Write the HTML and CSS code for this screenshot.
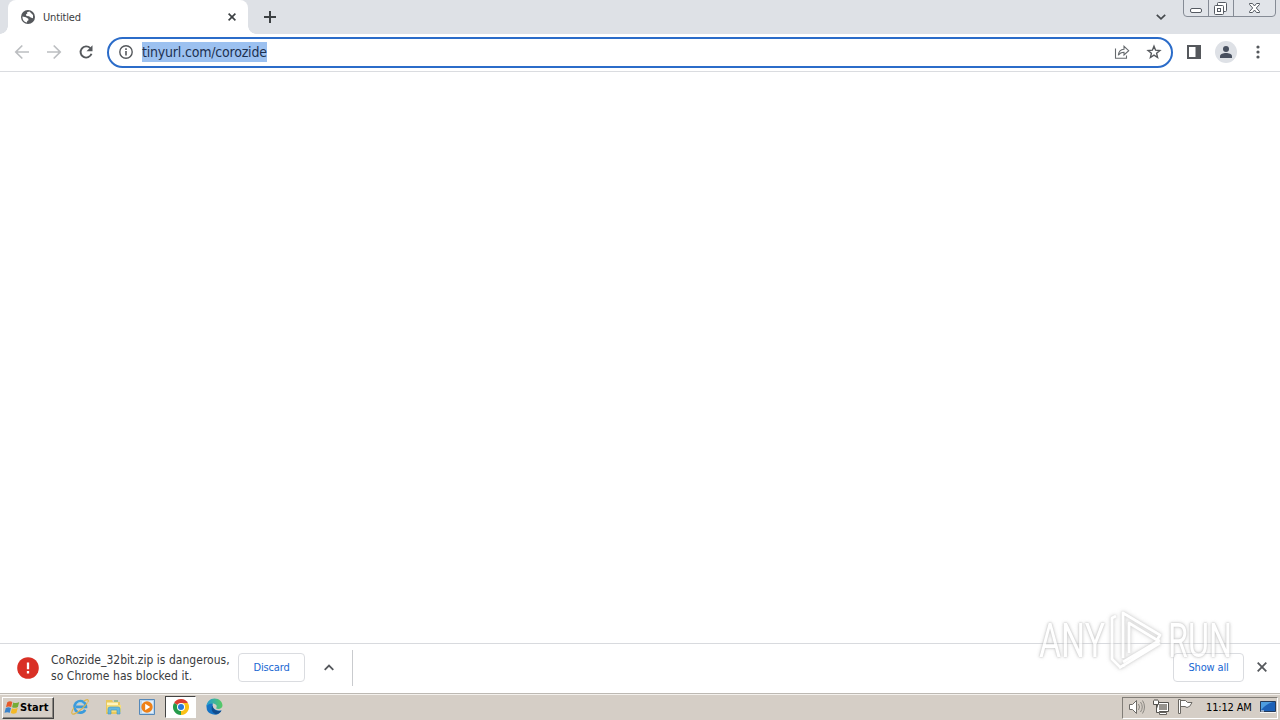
FILE: index.html
```html
<!DOCTYPE html>
<html lang="en">
<head>
<meta charset="utf-8">
<title>Untitled</title>
<link rel="stylesheet" href="styles.css">
</head>
<body>
<div class="screen">
  <header class="tabstrip">
    <div class="tab">
      <svg class="globe" width="14" height="14" viewBox="0 0 14 14"><circle cx="7" cy="7" r="7" fill="#55585c"/><path d="M6 2.2 8.500 1.600 12 5v3.200L9.700 7.600 8 6.200 5.400 6 5 4.200 6.400 3.600zM1.500 6.500l3.400.7 2.400 1.500.2 1.500-1.300.9-.2 1.500C3 12 1.200 9.400 1.500 6.500z" fill="#fff"/></svg>
      <span class="tab-title">Untitled</span>
      <svg class="tab-close" width="8" height="8" viewBox="0 0 8 8"><path d="M.6.6l6.800 6.800M7.400.6.6 7.400" stroke="#3c4043" stroke-width="1.600"/></svg>
    </div>
    <svg class="new-tab" width="12" height="12" viewBox="0 0 12 12"><path d="M6 0v12M0 6h12" stroke="#3c4043" stroke-width="2"/></svg>
    <svg class="tab-search" width="10" height="6" viewBox="0 0 10 6"><path d="M.8.8 5 4.800 9.200.8" fill="none" stroke="#45494d" stroke-width="1.700"/></svg>
    <div class="window-controls">
      <svg width="93" height="17" viewBox="0 0 93 17">
        <path d="M.5 0v13q0 3.500 3.500 3.500h85q3.500 0 3.500-3.500V0M25.500 0v16M50.500 0v16" fill="#e1e4e9" stroke="#858b95"/>
        <rect x="7.500" y="8.500" width="11" height="4" rx="1.500" fill="#fff" stroke="#555a62"/>
        <g fill="#fff" stroke="#555a62"><rect x="34.500" y="2.500" width="9" height="9" rx="1"/><rect x="31.500" y="5.500" width="9" height="9" rx="1"/><rect x="34.500" y="8.500" width="3" height="3"/></g>
        <path d="M66.500 3.500h3l2 2.500 2-2.500h3v1L73.300 8l3.200 3.500v1h-3l-2-2.500-2 2.500h-3v-1L69.700 8l-3.200-3.500z" fill="#fff" stroke="#555a62"/>
      </svg>
    </div>
  </header>
  <div class="toolbar">
    <svg class="nav" width="90" height="16" viewBox="0 0 90 16"><g fill="none" stroke-width="1.700"><path d="M15 8H2M8.300 1.500 1.800 8l6.500 6.500M33 8h13M39.700 1.500 46.200 8l-6.500 6.500" stroke="#bcbec1"/><path d="M76.300 4.200A5.600 5.600 0 1 0 77.500 9.800" stroke="#55585c" stroke-width="1.900"/></g><path d="M78.500 1.200v6h-6z" fill="#55585c"/></svg>
    <div class="omnibox">
      <svg class="info" width="14" height="14" viewBox="0 0 14 14"><circle cx="7" cy="7" r="6.200" fill="none" stroke="#55585c" stroke-width="1.400"/><path d="M7 6v4.500M7 3.300v1.600" stroke="#55585c" stroke-width="1.600"/></svg>
      <span class="url">tinyurl.com/corozide</span>
      <svg class="share" width="16" height="14" viewBox="0 0 16 14"><path d="M1.500 3.500v9.800h11V10.500M4.300 10.300C4.700 6.500 6.800 4.500 10 4.300V1.300L14.700 5.700 10 10V7.200C7.200 7.200 5.600 8.200 4.300 10.300z" fill="none" stroke="#666a6e" stroke-width="1.100"/></svg>
      <svg class="star" width="16" height="16" viewBox="0 0 16 16"><path d="M8 2.200 9.600 6.200l4.300.3-3.300 2.800 1 4.200L8 11.200l-3.600 2.300 1-4.200-3.300-2.800 4.300-.3z" fill="none" stroke="#55585c" stroke-width="1.400"/></svg>
    </div>
    <svg class="side-panel" width="14" height="14" viewBox="0 0 14 14"><path d="M0 0h14v14H0zM2 2v10h6.500V2z" fill="#55585c" fill-rule="evenodd"/></svg>
    <svg class="avatar" width="22" height="22" viewBox="0 0 22 22"><circle cx="11" cy="11" r="11" fill="#dee1e6"/><circle cx="11" cy="8" r="3" fill="#48505f"/><path d="M5 16.900v-1.600c0-2.200 3.300-3.300 6-3.300s6 1.100 6 3.300v1.600z" fill="#48505f"/></svg>
    <svg class="menu" width="4" height="14" viewBox="0 0 4 14"><g fill="#55585c"><circle cx="2" cy="2" r="1.600"/><circle cx="2" cy="7" r="1.600"/><circle cx="2" cy="12" r="1.600"/></g></svg>
  </div>
  <main class="page"></main>
  <div class="downloads">
    <svg class="danger" width="22" height="22" viewBox="0 0 22 22"><circle cx="11" cy="11" r="10.800" fill="#d93025"/><path d="M11 5.500v6.800M11 14v2.400" stroke="#fff" stroke-width="2.300"/></svg>
    <div class="message"><span>CoRozide_32bit.zip is dangerous,</span><span class="line-two">so Chrome has blocked it.</span></div>
    <div class="button discard"><span>Discard</span></div>
    <svg class="expand" width="10" height="7" viewBox="0 0 10 7"><path d="M.7 5.800 5 1.500l4.300 4.300" fill="none" stroke="#55585c" stroke-width="1.800"/></svg>
    <div class="divider"></div>
    <div class="button show-all"><span>Show all</span></div>
    <svg class="shelf-close" width="10" height="10" viewBox="0 0 10 10"><path d="m.7.7 8.600 8.600M9.300.7.7 9.300" stroke="#55585c" stroke-width="1.800"/></svg>
  </div>
  <footer class="taskbar">
    <div class="start">
      <svg width="17" height="16" viewBox="0 0 17 16"><path d="M3.300 2.200Q6 .5 8.300 2L7.200 7Q4.500 5.800 2 7z" fill="#e65a2b"/><path d="M9.200 2.500q3 1.200 6-.4l-1.300 4.800q-3 1.600-5.800.3z" fill="#75ac36"/><path d="M1.800 8Q4.500 6.700 7 8l-1.200 4.800q-2.500-1.300-5.300 0z" fill="#3a83cb"/><path d="M7.900 8.300q3 1.200 5.800-.2l-1.300 4.900q-3 1.300-5.600.1z" fill="#f4b927"/></svg>
      <span class="start-text">Start</span>
    </div>
    <svg class="ie" width="18" height="18" viewBox="0 0 18 18"><path d="M14.200 11.800A5.800 5.800 0 1 1 15 8.900H5" fill="none" stroke="#3a9bdc" stroke-width="2.600"/><path d="M12.700 3.300C16 .8 18 1.200 17 4.100M3 9.500C-.4 14.300.2 17.300 4 15.600 8.500 13.600 14.200 8 16.500 4.500" fill="none" stroke="#dcb54c" stroke-width="1.200"/><path d="M6 6.200Q9 2.800 12.500 6" fill="none" stroke="#8cd4f4"/></svg>
    <svg class="explorer" width="18" height="18" viewBox="0 0 18 18"><path d="M1 2h6l1 2h7v12H1z" fill="#e9c85c"/><path d="M2 4.500h11V10H2z" fill="#fff5bd"/><path d="M2 7h14v7H2z" fill="#f6dd79"/><path d="M3 16V11q0-2 2-2h8q2 0 2 2v5h-3v-4H6v4z" fill="#66b8de" stroke="#3f93bd" stroke-width=".6"/><path d="M9 3h4" stroke="#58a760"/></svg>
    <svg class="media" width="16" height="16" viewBox="0 0 16 16"><path d="M.5.500h15v15H.5z" fill="#b9d5ee" stroke="#5588b9"/><path d="M3 2h11v12H3z" fill="#e1effb"/><circle cx="8" cy="8" r="5.700" fill="#ee8118"/><path d="m6.200 4.700 5 3.300-5 3.300z" fill="#fff"/></svg>
    <div class="active-app"><svg width="16" height="16" viewBox="0 0 16 16"><path d="M8 8 1.070 4A8 8 0 0 1 14.930 4z" fill="#dc3e31"/><path d="M8 8 14.930 4A8 8 0 0 1 8 16z" fill="#fbc116"/><path d="M8 8v8A8 8 0 0 1 1.070 4z" fill="#269b4b"/><path d="M8 4h6.930L11.500 10 8 16l3.460-6z" fill="#fbc116"/><circle cx="8" cy="8" r="4" fill="#fff"/><circle cx="8" cy="8" r="3" fill="#2879db"/></svg></div>
    <svg class="edge" width="17" height="17" viewBox="0 0 17 17"><defs><linearGradient id="wave" x2="1"><stop stop-color="#249bd5"/><stop offset="1" stop-color="#58cb61"/></linearGradient></defs><path d="M.5 8.500C.5 4 4 3.500 7 5.500 5.500 9 8 12.800 15.500 12.500A8 8 0 0 1 .5 8.500z" fill="#1673c5"/><path d="M.5 8.500C.8 3.700 4 .5 8.500.5c5 0 8 3.500 8 7 0 3.500-4.700 4.200-6.500 2.700 2-2-.2-4.700-3.500-4.700-2.800 0-5 1-6 3z" fill="url(#wave)"/><path d="M6.500 7.500C4.500 10.500 6 15 10 16.200c2.500-.3 4.500-1.700 5.500-3.700-3.500 1.500-8.200.2-9-5z" fill="#124c8d"/></svg>
    <div class="tray">
      <svg class="speaker" width="17" height="16" viewBox="0 0 17 16"><path d="M1.500 5.500h3l4-4v13l-4-4h-3z" fill="#fff" stroke="#6d6b67"/><path d="M10.500 5q2 3 0 6M12.500 3q3.500 5 0 10M14.500 1.500q4 6.500 0 13" fill="none" stroke="#8b8882"/></svg>
      <svg class="network" width="16" height="16" viewBox="0 0 16 16"><path d="M4.500 3.500h11v9h-11z" fill="#fff" stroke="#55534f"/><path d="M6 5h8v6H6z" fill="#96938e"/><path d="M6.500 13.500h7v2h-7z" fill="#fff" stroke="#66635f"/><path d="M.5 1.500v4h5v-4M2 0v2M4 0v2M3.500 5.500v8h3" fill="#fff" stroke="#55534f"/></svg>
      <svg class="flag" width="16" height="16" viewBox="0 0 16 16"><path d="M1.500.5h2v14h-2zM3.500 1.500h5l2 2h4.500q-2 5-5 5L8 7.500H3.500z" fill="#fff" stroke="#6b6863"/></svg>
      <span class="clock">11:12 AM</span>
      <svg class="desktop" width="16" height="12" viewBox="0 0 16 12"><path d="M.5.500h15v10H.5z" fill="#1d61b7" stroke="#263b59"/><path d="M1 1h12Q6 3 1 9z" fill="#4d9de0"/><path d="M0 11.500h16" stroke="#f6f6f6"/><path d="M1 10h3" stroke="#fff"/></svg>
    </div>
  </footer>
  <div class="watermark">
    <span class="any">ANY</span>
    <svg class="play" width="58" height="64" viewBox="0 0 58 64"><path d="M9 7 5 9v41l8 8 5-2M16 49V4l37 22-3 5-28-17v30M16 53l37-22M12 59 53 34" fill="none" stroke="#fff" stroke-width="2.800" stroke-linejoin="round"/></svg>
    <span class="run">RUN</span>
  </div>
</div>
</body>
</html>
```
FILE: styles.css
```css
* { box-sizing: border-box; }
body { margin: 0; overflow: hidden; font-family: "DejaVu Sans Condensed", "DejaVu Sans", sans-serif; color: #3a3c40; }
svg { display: block; flex: none; }
span { white-space: nowrap; }
.screen { width: 1280px; height: 720px; display: flex; flex-direction: column; position: relative; background: #fff; }
.tabstrip { height: 34px; flex: none; display: flex; background: #dee1e6; padding-left: 8px; }
.tab { width: 240px; background: #fff; border-radius: 8px 8px 0 0; display: flex; align-items: center; padding-left: 13px; position: relative; }
.tab::before, .tab::after { content: ""; position: absolute; bottom: 0; width: 8px; height: 8px; }
.tab::before { left: -8px; background: radial-gradient(circle at 0 0, #dee1e6 7.5px, #fff 8px); }
.tab::after { right: -8px; background: radial-gradient(circle at 100% 0, #dee1e6 7.5px, #fff 8px); }
.tab-title { margin-left: 8px; padding-top: 1px; font-size: 11px; line-height: 14px; letter-spacing: -.15px; }
.tab-close { margin-left: auto; margin-right: 12px; }
.new-tab { margin: 11px 0 0 16px; }
.tab-search { margin: 14px 17px 0 auto; }
.window-controls { width: 93px; margin-right: 4px; }
.toolbar { height: 38px; flex: none; display: flex; align-items: center; border-bottom: 1px solid #dadce0; padding-bottom: 1px; }
.nav { margin: 0 3px 0 14px; }
.omnibox { width: 1066px; height: 31px; margin-top: 1px; border: 2px solid #2b6cc9; border-radius: 16px; display: flex; align-items: center; padding: 0 9px 1px 10px; }
.url { margin-left: 9px; height: 20px; line-height: 21px; background: #9cc1f0; color: #1d3150; font-size: 14px; letter-spacing: -.2px; }
.share { margin: 0 16px 0 auto; }
.side-panel { margin-left: 14px; }
.avatar { margin-left: 14px; }
.menu { margin-left: 19px; }
.page { flex: 1; }
.downloads { height: 50px; flex: none; display: flex; align-items: center; border-top: 1px solid #d8dade; padding: 0 0 2px 17px; }
.danger { margin-top: 1px; }
.message { width: 187px; margin-left: 12px; font-size: 12px; line-height: 16px; letter-spacing: .02px; }
.message span { display: block; }
.line-two { letter-spacing: .06px; }
.button { height: 29px; border: 1px solid #dadce0; border-radius: 4px; display: flex; align-items: center; justify-content: center; color: #1967d2; font-size: 11px; letter-spacing: -.15px; }
.button span { margin-top: -1px; }
.discard { width: 67px; }
.expand { margin-left: 19px; }
.divider { width: 1px; height: 36px; margin: 1px 0 0 18px; background: #c9cbce; }
.show-all { width: 71px; margin-left: auto; }
.shelf-close { margin: -1px 13px 0; }
.taskbar { height: 27px; flex: none; display: flex; align-items: center; background: #d5cec6; border-top: 1px solid #bdb9b3; box-shadow: inset 0 1px #f4f1ed; padding: 1px 1px 0 2px; color: #000; }
.start { width: 52px; height: 22px; display: flex; align-items: center; padding-left: 1px; border: 1px solid; border-color: #fff #444 #444 #fff; box-shadow: inset -1px -1px #8c8882; }
.start-text { font-size: 11px; font-weight: bold; letter-spacing: .1px; margin-left: -1px; }
.ie { margin: -1px 0 0 17px; }
.explorer { margin: -1px 0 0 16px; }
.media { margin: -2px 0 0 16px; }
.active-app { width: 31px; height: 22px; margin: -1px 0 0 10px; display: flex; align-items: center; justify-content: center; background: #fff; border: 1px solid; border-color: #444 #fff #fff #444; }
.edge { margin: -2px 0 0 10px; }
.tray { width: 156px; height: 22px; margin: 0 1px 0 auto; display: flex; align-items: center; border: 1px solid; border-color: #817d77 #fff #fff #817d77; padding: 0 0 1px 5px; }
.network { margin-left: 8px; }
.flag { margin-left: 8px; }
.clock { margin-left: 13px; font-size: 11px; letter-spacing: -.15px; }
.desktop { margin: 0 1px 0 auto; }
.watermark { position: absolute; left: 1039px; top: 609px; width: 194px; height: 64px; display: flex; align-items: center; opacity: .68; pointer-events: none; }
.play { filter: drop-shadow(0 0 1px #bbb) drop-shadow(0 0 2px #ccc); }
.any, .run { font-family: Roboto, sans-serif; font-size: 49px; line-height: 36px; height: 36px; color: #fff; text-shadow: 0 0 2px #aaa, 0 0 3px #bbb, 0 0 5px #ccc; transform-origin: left; }
.any { width: 68px; transform: scaleX(.69); }
.run { width: 65px; transform: scaleX(.66); margin-left: 3px; }
```
